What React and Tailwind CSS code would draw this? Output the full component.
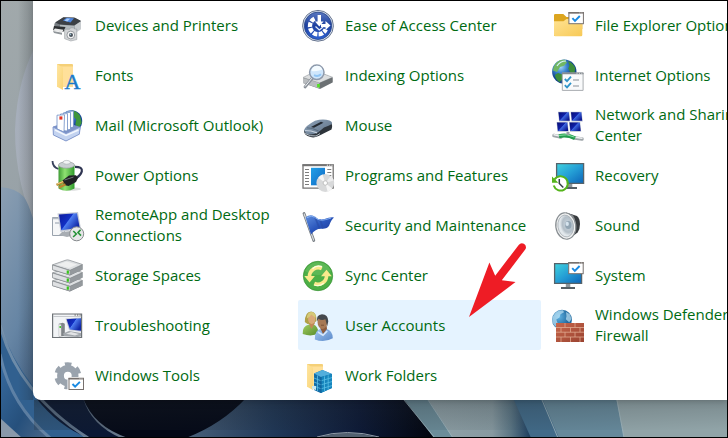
import React from "react";

function Icon({ children }) {
  return (
    <svg viewBox="0 0 32 32" className="size-8 shrink-0 overflow-visible" aria-hidden="true">
      {children}
    </svg>
  );
}

function CheckWindow({ x, y }) {
  return (
    <g transform={`translate(${x} ${y})`}>
      <rect x="0.5" y="0.5" width="14.5" height="11" fill="#fff" stroke="#77716e" />
      <path d="M0 0.6h15.5" stroke="#77716e" strokeWidth="1.6" />
      <path d="M11 .8h1M13 .8h1" stroke="#eee" strokeWidth=".8" />
      <path d="M4 6l2.6 2.7L11.4 3.8" fill="none" stroke="#1a8ae2" strokeWidth="1.9" />
    </g>
  );
}

function Printer() {
  return (
    <Icon>
      <path d="M2.5 14.5L11 8.5h11l7 3.5v5l-5 5H8l-6-3z" fill="#777d82" />
      <path d="M3 13.5L11.5 8.3 23 8.7l6 3.3-6.5 4.5L8 15.5z" fill="#3d4146" />
      <path d="M11 11.5l3.5-2.7 7.5.5-3.5 4.2z" fill="#4f86dd" />
      <path d="M12.5 11.4l2.6-1.8 3 .2-2.8 2.7z" fill="#a9cdfa" />
      <path d="M22.5 16.5l6.5-4.3v8l-6 4z" fill="#c9cdd0" />
      <path d="M8 15.8l14.5 1v6.4L8 21z" fill="#b4babd" />
      <path d="M2 17l11.5 1-2 4.8-10.5-1.5z" fill="#2d3033" />
      <path d="M3 19.5l8.5 1.2-1.4 2.6-9-1.7z" fill="#e8e9e9" />
      <path d="M1 22l9 1.8v2L2 24z" fill="#8f9599" />
      <path d="M12.6 20.2h5l1-1.4h3l1 1.2h2.2v10.6l-6 1.4-6.2-2.3z" fill="#d3d5d7" stroke="#8d9296" strokeWidth=".5" />
      <circle cx="18.8" cy="26" r="3.9" fill="#f4f4f4" stroke="#8e9397" strokeWidth=".9" />
      <circle cx="19" cy="26" r="2" fill="#49525c" />
      <circle cx="18.4" cy="25.4" r=".8" fill="#9dbecb" />
    </Icon>
  );
}

function OpenFolder({ id }) {
  return (
    <>
      <defs>
        <linearGradient id={id} x1="0" x2="1" y1="0" y2="1">
          <stop offset="0" stopColor="#ffe5a0" />
          <stop offset="1" stopColor="#f9d477" />
        </linearGradient>
      </defs>
      <path d="M5 5h15q1 0 1 1v22H5z" fill="#f5d078" />
      <path d="M9 7.5h12V28H9z" fill="#ffe09a" />
      <path d="M5 5l5.3 3.2q.7.5.7 1.4V31L5 27.8z" fill={`url(#${id})`} />
    </>
  );
}

function FontsIcon() {
  return (
    <Icon>
      <OpenFolder id="fontsFolder" />
      <text x="12.4" y="30.2" fontSize="22" fill="#1b7ac8" stroke="#1b7ac8" strokeWidth=".5" style={{ fontFamily: '"Liberation Serif", serif' }}>
        A
      </text>
    </Icon>
  );
}

function Mail() {
  return (
    <Icon>
      <defs>
        <radialGradient id="mailGlobe" cx=".35" cy=".3">
          <stop offset="0" stopColor="#7ebcf2" />
          <stop offset="1" stopColor="#123f9c" />
        </radialGradient>
      </defs>
      <circle cx="19.4" cy="12" r="10.8" fill="url(#mailGlobe)" />
      <path d="M20 1.5q5 .5 8 5l1.8 7-3 6-3.5-4 1-5-4-4z" fill="#3f953b" />
      <path d="M1 17.5l13-4 14.5 4.5-1 7L14 32 1.5 26z" fill="#7e93c8" />
      <path d="M14.5 2.5l7-.5v16l-7 2z" fill="#f6f9ff" stroke="#6d8dc4" strokeWidth=".8" />
      <path d="M11.5 3.8l7-.4v17l-7 1z" fill="#fff" stroke="#6d8dc4" strokeWidth=".8" />
      <path d="M8.5 5l7-.4v17.4l-7-.5z" fill="#fff" stroke="#6d8dc4" strokeWidth=".8" />
      <path d="M5 6.2l7.5-.4L12 23l-7-3z" fill="#fff" stroke="#6d8dc4" strokeWidth=".8" />
      <path d="M7.4 7.4h3v3.2h-3z" fill="#e43225" />
      <path d="M1 18l13 6.5L28.3 18l-1 7.2L14 32 1.4 26z" fill="#c3d3f0" stroke="#7f95cb" strokeWidth=".9" />
      <path d="M3 21l11 5.4L26.5 21" fill="none" stroke="#f3f7fe" strokeWidth="1.5" />
    </Icon>
  );
}

function Power() {
  return (
    <Icon>
      <defs>
        <linearGradient id="battery">
          <stop offset="0" stopColor="#3f9c35" />
          <stop offset=".4" stopColor="#8fe272" />
          <stop offset="1" stopColor="#2e9a2a" />
        </linearGradient>
      </defs>
      <ellipse cx="18" cy="30" rx="11" ry="1.8" fill="#dcddde" />
      <path d="M.5 2q0 6 6 8" fill="none" stroke="#39425d" strokeWidth="1.8" />
      <path d="M6.5 6h16v23.5q-8 4.5-16 0z" fill="url(#battery)" />
      <ellipse cx="14.5" cy="6" rx="8" ry="3.2" fill="#c9cfd2" stroke="#8b9296" strokeWidth=".6" />
      <ellipse cx="14.7" cy="3.3" rx="3.7" ry="1.9" fill="#f2f4f5" stroke="#969ea2" strokeWidth=".5" />
      <path d="M23 7.8q7.8 0 6.8 4.6-1 3.8-6 7" fill="none" stroke="#2f3552" strokeWidth="2.2" />
      <path d="M10.5 21.5l6.5-5 7-.3 2 2.8-2 4-7.5 4-4.5-1z" fill="#1f2124" />
      <path d="M12.5 21l9-3" stroke="#85898f" strokeWidth=".8" />
      <path d="M11.5 22.8l-7 3M13.5 25.3l-6.5 3.2" stroke="#b98630" strokeWidth="2.4" />
      <path d="M11 22.5l-6 2.6" stroke="#f5d98b" strokeWidth=".9" />
    </Icon>
  );
}

function BlueScreen({ id }) {
  return (
    <linearGradient id={id} x1="0" y1="0" x2="1" y2=".6">
      <stop offset="0" stopColor="#0d1a9c" />
      <stop offset=".5" stopColor="#1230c4" />
      <stop offset=".54" stopColor="#4d7df0" />
      <stop offset="1" stopColor="#1128a8" />
    </linearGradient>
  );
}

function RemoteApp() {
  return (
    <Icon>
      <defs><BlueScreen id="remoteScreen" /></defs>
      <path d="M.5 8.5h12v18H.5z" fill="#f6f7f8" stroke="#9aa3ad" />
      <path d="M.5 9.5h12M3 14h6" stroke="#b2bac3" strokeWidth="1.4" />
      <path d="M10 23l9-1 4 4-8 2-8-2z" fill="#a8adb3" />
      <path d="M5.5 4.5L26 3l3 17-20.5 3z" fill="#c4c9d4" />
      <path d="M7 5.5L25 4.3l2.7 14.5L9.3 21.2z" fill="url(#remoteScreen)" />
      <circle cx="24.7" cy="24.8" r="7" fill="#e6e7e8" stroke="#85898c" />
      <path d="M21.3 22l3 3-3.2 3M28.6 20.8l-2.6 2.8 3 3" fill="none" stroke="#279338" strokeWidth="1.6" />
    </Icon>
  );
}

function Storage() {
  return (
    <Icon>
      {[16.5, 8.5, 0.5].map((y) => (
        <g key={y} transform={`translate(0 ${y})`}>
          <path d="M.5 5.5v5L18 16l12.5-6V5z" fill="#7c8186" />
          <path d="M.5 5.3L14 .6q1.5-.5 3 0L30.5 5 18 10.8z" fill="#dcdfe1" stroke="#898e92" strokeWidth=".7" />
          <path d="M.5 5.5L18 11v4.6L.5 10.2z" fill="#dfe1e3" stroke="#7f8488" strokeWidth=".6" />
          <path d="M18 11l12.5-5.5v4.7L18 15.6z" fill="#94999d" />
          <path d="M5 5.2l9.5-3.2L25 5l-8 3.5z" fill="#eeefef" />
          <path d="M15.8 11v3.2" stroke="#38c51a" strokeWidth="2.2" />
        </g>
      ))}
    </Icon>
  );
}

function Troubleshooting() {
  return (
    <Icon>
      <defs><BlueScreen id="troubleScreen" /></defs>
      <path d="M.6 5h29v23.5H.6z" fill="#f2f4f6" stroke="#6e7377" strokeWidth="1.2" />
      <path d="M1.2 7.5h28" stroke="#b9bdc1" strokeWidth=".8" />
      <path d="M22.5 6h1.3M25 6h1.3M27.5 6h1.3" stroke="#555" strokeWidth="1" />
      <path d="M6.8 14.7l4-1 2 1V27l-6 .5z" fill="#7f8488" />
      <path d="M7 15.2l2.2.2v11.8L7 27z" fill="#e8e8e8" />
      <path d="M8.2 17v2" stroke="#3fc92d" strokeWidth="1.5" />
      <path d="M13.5 9.5l15.5-1v14.2l-12-1.4z" fill="#c4c9d5" />
      <path d="M14.6 10.3L29 9.2v12.5l-11-1.3z" fill="url(#troubleScreen)" />
      <path d="M11 24.5l6-2.5 12 2v3.4l-3 .6-14-.8z" fill="#a3a8ad" />
      <path d="M14 24.8l5-1.7 8 1.8-4 1.5z" fill="#e2e4e6" />
    </Icon>
  );
}

function Tools() {
  return (
    <Icon>
      <g fill="none" stroke="#9aa3ad">
        <circle cx="15.8" cy="16.7" r="7.3" strokeWidth="6.8" />
        <circle cx="15.8" cy="16.7" r="11.3" strokeWidth="4.4" strokeDasharray="6.3 5.533" strokeDashoffset="9.07" />
      </g>
      <path d="M15.5 18h17v13.5h-17z" fill="#fff" />
      <CheckWindow x={16.5} y={19} />
    </Icon>
  );
}

function Ease() {
  return (
    <Icon>
      <defs>
        <linearGradient id="easeBlue" x2="0" y2="1">
          <stop offset="0" stopColor="#5a78c0" />
          <stop offset=".5" stopColor="#1c3f9f" />
          <stop offset="1" stopColor="#2f62d2" />
        </linearGradient>
      </defs>
      <circle cx="16" cy="16.8" r="15.4" fill="#dce5f3" stroke="#68758e" />
      <circle cx="16" cy="16.8" r="13.7" fill="url(#easeBlue)" stroke="#274587" strokeWidth=".8" />
      <path d="M12.5 9.6a8.3 8.3 0 1 0 11.3 10.8" fill="none" stroke="#fff" strokeWidth="4.4" strokeDasharray="4.4 1.2" />
      <path d="M17.3 6v8" stroke="#fff" strokeWidth="3.4" />
      <path d="M13 12.6h8.6l-4.3 5z" fill="#fff" />
      <path d="M19 16.6h6" stroke="#fff" strokeWidth="3.2" />
      <path d="M23.5 12l5 4.6-5 4.5z" fill="#fff" />
      <path d="M13.5 17.5l3.8 3.5 3.5-2.7" fill="none" stroke="#e7eefb" strokeWidth="1.2" />
    </Icon>
  );
}

function Indexing() {
  return (
    <Icon>
      <path d="M1 19l13-7 16.5 6.5v5L18 30 1 24z" fill="#74797d" />
      <path d="M1 18.5L14 12l16.5 6.2L17.5 24z" fill="#dcdedf" stroke="#a0a4a7" strokeWidth=".6" />
      <path d="M1 19l16.5 5v5.5L1 24z" fill="#b9bcbf" />
      <path d="M17.5 24l13-5.5v4.7l-13 6z" fill="#6b7073" />
      <path d="M16.5 25v3.4" stroke="#54df25" strokeWidth="2.8" />
      <path d="M10.5 19l-7.5 9" stroke="#8b9199" strokeWidth="2.8" strokeLinecap="round" />
      <path d="M10 19l-7 8.5" stroke="#eef1f4" strokeWidth="1" />
      <circle cx="14.8" cy="13.3" r="7.2" fill="#cfe6fb" stroke="#8d99ab" strokeWidth="1.5" />
      <path d="M9.5 12q.5-5 5.5-5.2 4.5 0 5.3 4-6 2-10.8 1.2z" fill="#f4fbff" />
      <path d="M12 16.2q4 2 7-1" stroke="#91c5f4" strokeWidth="2" fill="none" />
    </Icon>
  );
}

function Mouse() {
  return (
    <Icon>
      <defs>
        <linearGradient id="mouseTop" y2="1">
          <stop offset="0" stopColor="#8ea3b9" />
          <stop offset="1" stopColor="#5f7287" />
        </linearGradient>
      </defs>
      <path d="M2 21.5q0 5 6.5 6.6 4 1 8-1l13-6.6q1-2 .5-5-3-4-12-3z" fill="#2d343b" />
      <path d="M2 21.2q1-4 11-9.4 8-2.5 14.5-.2 3 1.4 2.5 3.4-3 1.5-8 3.5l-6 5Q9 27 4 24.5z" fill="url(#mouseTop)" />
      <path d="M3 21.5q6 0 12 2.4" stroke="#c5d0dc" strokeWidth="1.2" fill="none" />
      <path d="M5 18.8q5-.3 11.5 3.2" stroke="#526376" strokeWidth=".8" fill="none" />
      <path d="M9 18l10-5.3 2.5 1L12 18.8z" fill="#242a32" />
      <path d="M3 24.5q5 3 11 2.5l4-2.4" stroke="#b4bdc5" strokeWidth="1" fill="none" />
    </Icon>
  );
}

function Programs() {
  return (
    <Icon>
      <defs>
        <linearGradient id="programBlue" x2="1" y2="1">
          <stop offset="0" stopColor="#21a0e7" />
          <stop offset="1" stopColor="#1168c4" />
        </linearGradient>
      </defs>
      <path d="M1 5.8h30.2v23.4H1z" fill="#fff" stroke="#747373" strokeWidth="1.3" />
      <path d="M.5 6.2h31" stroke="#747373" strokeWidth="2" />
      <path d="M24.8 6.2h1.2M27.1 6.2h1.2M29.4 6.2h1.2" stroke="#eee" strokeWidth="1" />
      <path d="M3 10.5h4M3 13.5h4M3 16.5h4M3 19.5h4M3 22.5h4M3 25.5h4M25.3 10.5h4M25.3 13.5h4M25.3 16.5h4" stroke="#7d7d7d" />
      <path d="M9 8.8h14v17.5H9z" fill="url(#programBlue)" />
      <circle cx="23.3" cy="24" r="8.9" fill="#d8d9da" />
      <path d="M23.3 24l-7-5.3a9 9 0 0 1 4.3-3.1zM23.3 24l6.8 5.4a9 9 0 0 1-4.5 3.2z" fill="#f6f6f6" />
      <path d="M23.3 24l5.5-7a9 9 0 0 1 3 4.5z" fill="#ededee" />
      <circle cx="23.3" cy="24" r="2.2" fill="#fff" stroke="#b5b5b5" strokeWidth=".8" />
    </Icon>
  );
}

function Flag() {
  return (
    <Icon>
      <defs>
        <linearGradient id="flagBlue" y2="1">
          <stop offset="0" stopColor="#5f8ede" />
          <stop offset=".5" stopColor="#2b57bd" />
          <stop offset="1" stopColor="#1b3391" />
        </linearGradient>
      </defs>
      <path d="M2 4.5l9.8 27" stroke="#73797f" strokeWidth="2.8" strokeLinecap="round" />
      <path d="M2 4.5l9.8 27" stroke="#d9dde0" strokeWidth="1.2" />
      <path d="M3.5 8.5Q8 4.5 12.5 7.5q4 4 10 2.5 5-2 9.5-1.6-3 2.4-4.8 8.2-2 3.5-7.2 3.2-6-.7-11 5.7z" fill="url(#flagBlue)" />
      <path d="M13 8l4.5 11.5M18 10.4l3 9" stroke="#284ca7" strokeWidth="1.8" opacity=".6" />
      <path d="M5 8.7q4.5-3 7.5-.5 5 4.3 11 2.4l5.5-1.5" fill="none" stroke="#8cb5f4" strokeWidth=".9" />
    </Icon>
  );
}

function Sync() {
  return (
    <Icon>
      <circle cx="16" cy="17" r="14.7" fill="#4caf46" stroke="#389132" strokeWidth=".7" />
      <path d="M3 12a14 14 0 0 1 26 0q-13 8-26 0z" fill="#79c56f" opacity=".4" />
      <g fill="none" stroke="#fae98c" strokeWidth="3.6">
        <path d="M7.5 17.5a8.7 8.7 0 0 1 12.3-8" />
        <path d="M24.6 16.5a8.7 8.7 0 0 1-12.3 8" />
      </g>
      <path d="M2.3 17h10.6l-5.3 6.4zM19 17.2l5.5-6.5 5.3 6.5z" fill="#fae98c" />
      <path d="M10.5 9.7q4-4 9.5-1.9" fill="none" stroke="#fffbd9" strokeWidth="1.5" />
      <path d="M21.7 24.2q-4.3 3.7-9.5 1.8" fill="none" stroke="#fffbd9" strokeWidth="1.2" />
    </Icon>
  );
}

function Users() {
  return (
    <Icon>
      <defs>
        <linearGradient id="userGreen" y2="1">
          <stop offset="0" stopColor="#a2cd62" />
          <stop offset="1" stopColor="#568c2a" />
        </linearGradient>
        <linearGradient id="userBlue" y2="1">
          <stop offset="0" stopColor="#a3c8f2" />
          <stop offset="1" stopColor="#5a89c9" />
        </linearGradient>
      </defs>
      <path d="M.7 25q-.6-8 6.2-9.5h4.8q4.5 2 4.7 8.5-6 4.2-15.7 1z" fill="url(#userGreen)" />
      <path d="M6.5 14l3 6 3.2-5.5v-3H6.5z" fill="#c28756" />
      <path d="M2.8 13Q3 2.5 9.2 2.4q5.5.2 5.3 9.6l-3.5 2.5-5.5.5z" fill="#b0a048" />
      <ellipse cx="9.7" cy="10" rx="3.6" ry="5" fill="#d9a878" />
      <path d="M4.8 9.5q3.5-1.6 4.5-4 1.7 2 4.6 3.2Q13.5 3 9.2 3 5 3.2 4.8 9.5z" fill="#d5c978" />
      <path d="M12.8 30.5q-.5-9 6-10.7h5.7q6.4 2.3 6.3 9.5-8.5 4.8-18 1.2z" fill="url(#userBlue)" />
      <path d="M18 18.5l3 6.5 4-5-.4-3.5h-6z" fill="#8d5b3c" />
      <ellipse cx="20.4" cy="13.2" rx="4.8" ry="6.7" fill="#a77955" />
      <path d="M15 12.5Q14 5.8 20 5.3q6 .1 6.3 7l-1.1 5-1.8-7q-4 1.6-6.9-.6z" fill="#44484d" />
      <path d="M19 16.2h3" stroke="#694028" strokeWidth=".7" />
      <path d="M16 23l5 3.2 4.2-4.2" stroke="#d7e8fb" strokeWidth="1.6" fill="none" />
    </Icon>
  );
}

function WorkFolders() {
  return (
    <Icon>
      <OpenFolder id="workFolder" />
      <path d="M12 14.5L20.5 11l9.5 4v14l-11.5 5L12 31z" fill="#126ca7" />
      <path d="M12 14.5L20.5 11l9.5 4-11 3z" fill="#52aedc" />
      <path d="M19 18l11-3v14l-11 5z" fill="#1685bd" />
      <path d="M12 19l7 2.8 11-3.2M12 23l7 2.8 11-3.2M12 27l7 2.8 11-3.2M15.5 16.5V32M22.5 17.4v15M26.2 16.3V30.8" fill="none" stroke="#5cc0e6" strokeWidth=".8" />
      <path d="M19 18v16" stroke="#0c5e98" strokeWidth="1" />
      <path d="M10 27h4v4l-4-1z" fill="#c8e7f1" />
    </Icon>
  );
}

function ExplorerOptions() {
  return (
    <Icon>
      <defs>
        <linearGradient id="explorerFolder" y2="1">
          <stop offset="0" stopColor="#ffe394" />
          <stop offset="1" stopColor="#f7c956" />
        </linearGradient>
      </defs>
      <path d="M2 27V6.2Q2 5 3.3 5h8l3.2 3H29q1.3 0 1.3 1.2V20z" fill="#dca51f" />
      <path d="M2 12.3h9.5l3-2.3H29q1.3 0 1.3 1.2V26q0 1.3-1.3 1.3H3.3Q2 27.3 2 26z" fill="url(#explorerFolder)" />
      <CheckWindow x={16.4} y={3.2} />
    </Icon>
  );
}

function InternetOptions() {
  return (
    <Icon>
      <defs>
        <radialGradient id="internetGlobe" cx=".35" cy=".3">
          <stop offset="0" stopColor="#a8daf6" />
          <stop offset=".5" stopColor="#3d86d0" />
          <stop offset="1" stopColor="#12438e" />
        </radialGradient>
      </defs>
      <circle cx="12.3" cy="12.7" r="12.2" fill="url(#internetGlobe)" />
      <path d="M4 4q4-4 9-3.2l2 2.7-3 3.3-4 1.2-3 5-4-1.5q0-4 3-7.5z" fill="#72b763" />
      <path d="M16 2q5 2 7.3 7l-1 6-4-1.5-2-4 1.2-3zM6 14l6 2-1.8 4.3-2.7 3Q3 20 3 16z" fill="#3c8d3a" />
      <path d="M5 7q3-5 9-5" stroke="#d4f2fc" strokeWidth="1.2" fill="none" />
      <path d="M10.3 14h20.8v17.4H10.3z" fill="#f9fafb" stroke="#a9adb1" />
      <path d="M10 14.4h21.5" stroke="#858b91" strokeWidth="1.7" />
      <path d="M24.5 14.3h1M27 14.3h1M29.3 14.3h1" stroke="#eee" strokeWidth=".8" />
      <path d="M12.8 20l2.2 2.2 4-4.5M12.8 26.2l2.2 2.2 4-4.5" stroke="#2f93c9" strokeWidth="1.8" fill="none" />
      <path d="M21 21h6M21 27h6" stroke="#899099" strokeWidth="1.2" />
    </Icon>
  );
}

function Network() {
  return (
    <Icon>
      <defs>
        <linearGradient id="networkScreen" x2="1" y2=".7">
          <stop offset="0" stopColor="#070d74" />
          <stop offset=".5" stopColor="#0f1fa6" />
          <stop offset=".56" stopColor="#3c66e0" />
          <stop offset="1" stopColor="#0c1790" />
        </linearGradient>
      </defs>
      {[[6, 2.7], [18.5, 2.7], [4.5, 13], [17, 13]].map(([x, y]) => (
        <g key={`${x}-${y}`} transform={`translate(${x} ${y})`}>
          <path d="M0 0h11.2l1 9.8H1z" fill="#b8c0d0" />
          <path d="M.5 .5h10.3l.9 8.5H1.4z" fill="url(#networkScreen)" />
        </g>
      ))}
      <path d="M2 26.5l7 1.5M23 29l7 1" stroke="#9ea5a9" strokeWidth="3.5" strokeLinecap="round" />
      <path d="M2 25.8l7 1.5M23 28.2l7 1" stroke="#eef0f1" strokeWidth="1.4" strokeLinecap="round" />
      <path d="M7 27.2q8-2 16 2" stroke="#229c4e" strokeWidth="4" fill="none" />
      <path d="M7 26.4q8-2 15.5 1.7" stroke="#8cdfa5" strokeWidth="1" fill="none" />
      <path d="M14.5 23h3v3h-3z" fill="#99a1a7" />
    </Icon>
  );
}

function Monitor({ id, x }) {
  return (
    <g transform={`translate(${x} 4)`}>
      <defs>
        <linearGradient id={id} x2="1" y2="1">
          <stop offset="0" stopColor="#3fd3df" />
          <stop offset=".5" stopColor="#249ed5" />
          <stop offset="1" stopColor="#0c63b8" />
        </linearGradient>
      </defs>
      <path d="M.6 .6h27v19.8H.6z" fill={`url(#${id})`} stroke="#55636b" strokeWidth="1.3" />
      <path d="M11.8 21h4.5v3h-4.5z" fill="#8c969c" />
      <path d="M7 24h14v2H7z" fill="#555f65" />
    </g>
  );
}

function Recovery() {
  return (
    <Icon>
      <Monitor id="recoveryScreen" x={4} />
      <circle cx="8.5" cy="24.7" r="7" fill="#fff" />
      <path d="M2.5 20.5a7.2 7.2 0 1 1-.8 6" fill="none" stroke="#55b41b" strokeWidth="2" />
      <path d="M0 17.5v6.3h6.3z" fill="#55b41b" />
      <path d="M7.3 20v4.5l4 4" fill="none" stroke="#364047" strokeWidth="1.5" />
    </Icon>
  );
}

function Sound() {
  return (
    <Icon>
      <defs>
        <radialGradient id="speakerCone" cx=".65" cy=".45">
          <stop offset="0" stopColor="#8193a0" />
          <stop offset=".25" stopColor="#c3cfd8" />
          <stop offset=".7" stopColor="#b3bec7" />
          <stop offset="1" stopColor="#e2e8ec" />
        </radialGradient>
      </defs>
      <path d="M14 3.5L25 7q3 2.5 3 8t-2.4 8.5L17 30z" fill="#383b3e" />
      <path d="M20 6q5 8 1 20" stroke="#76797c" strokeWidth="2" fill="none" />
      <ellipse cx="13.8" cy="17" rx="10" ry="13.3" transform="rotate(-8 13.8 17)" fill="#f1f2f2" stroke="#888e92" strokeWidth="1.2" />
      <ellipse cx="13.7" cy="17" rx="7.8" ry="11" transform="rotate(-8 13.7 17)" fill="url(#speakerCone)" stroke="#a6aeb4" strokeWidth=".8" />
      <ellipse cx="16.3" cy="16" rx="3.2" ry="4" fill="#92a5b3" />
      <ellipse cx="15.2" cy="14.9" rx="1.7" ry="2.1" fill="#d6e4ee" />
    </Icon>
  );
}

function System() {
  return (
    <Icon>
      <Monitor id="systemScreen" x={2} />
      <CheckWindow x={16.2} y={3.2} />
    </Icon>
  );
}

function Firewall() {
  return (
    <Icon>
      <defs>
        <radialGradient id="wallGlobe" cx=".35" cy=".35">
          <stop offset="0" stopColor="#5fb2e2" />
          <stop offset="1" stopColor="#226a9f" />
        </radialGradient>
        <linearGradient id="wallBrick" x2="1" y2="1">
          <stop offset="0" stopColor="#c9674b" />
          <stop offset="1" stopColor="#994230" />
        </linearGradient>
      </defs>
      <circle cx="10" cy="10.8" r="10" fill="url(#wallGlobe)" />
      <path d="M3 4.5Q6 1 11 1.2l1 2-3.5 2-1 3.4-3.2 2L6 15l-2 3Q-1 14 .6 8zM14 3l4 2.3 1.5 5-2.3 3-3.4-3 .7-3z" fill="#c9ebfa" opacity=".65" />
      <path d="M4 14h28v19H4z" fill="url(#wallBrick)" />
      <path d="M4 18.5h28M4 23.2h28M4 28h28M13 14v4.5M23 14v4.5M9 18.5v4.7M18.5 18.5v4.7M28 18.5v4.7M13 23.2V28M23 23.2V28M9 28v5M18.5 28v5M28 28v5" stroke="#e0aa91" strokeWidth=".8" />
    </Icon>
  );
}

const columns = [
  [
    ["Devices and Printers", Printer],
    ["Fonts", FontsIcon],
    ["Mail (Microsoft Outlook)", Mail],
    ["Power Options", Power],
    ["RemoteApp and Desktop Connections", RemoteApp],
    ["Storage Spaces", Storage],
    ["Troubleshooting", Troubleshooting],
    ["Windows Tools", Tools],
  ],
  [
    ["Ease of Access Center", Ease],
    ["Indexing Options", Indexing],
    ["Mouse", Mouse],
    ["Programs and Features", Programs],
    ["Security and Maintenance", Flag],
    ["Sync Center", Sync],
    ["User Accounts", Users],
    ["Work Folders", WorkFolders],
  ],
  [
    ["File Explorer Options", ExplorerOptions],
    ["Internet Options", InternetOptions],
    ["Network and Sharing Center", Network],
    ["Recovery", Recovery],
    ["Sound", Sound],
    ["System", System],
    ["Windows Defender Firewall", Firewall],
  ],
];

function Wallpaper() {
  return (
    <svg className="absolute inset-0 h-full w-full" viewBox="0 0 728 438" preserveAspectRatio="xMinYMax slice" aria-hidden="true">
      <defs>
        <linearGradient id="sky" y2="1">
          <stop offset="0" stopColor="#a1a9ab" />
          <stop offset=".4" stopColor="#929da5" />
          <stop offset=".6" stopColor="#7d90a3" />
          <stop offset=".8" stopColor="#40658d" />
          <stop offset="1" stopColor="#2b5c91" />
        </linearGradient>
        <linearGradient id="petal" y2="1">
          <stop offset="0" stopColor="#a5aebd" />
          <stop offset=".7" stopColor="#a8afb7" />
          <stop offset="1" stopColor="#929ca6" />
        </linearGradient>
        <linearGradient id="leftPetal" y2="1">
          <stop offset="0" stopColor="#8c9fb2" />
          <stop offset=".35" stopColor="#6685a4" />
          <stop offset=".6" stopColor="#3f5f84" />
          <stop offset=".85" stopColor="#1b3458" />
          <stop offset="1" stopColor="#11264b" />
        </linearGradient>
        <linearGradient id="blueFold" x2="1" y2="1">
          <stop offset="0" stopColor="#3a6ea3" />
          <stop offset=".6" stopColor="#26507c" />
          <stop offset="1" stopColor="#4b6889" />
        </linearGradient>
        <linearGradient id="centerFold" x2="1">
          <stop offset="0" stopColor="#48607a" />
          <stop offset=".35" stopColor="#20395a" />
          <stop offset=".7" stopColor="#0c1937" />
          <stop offset="1" stopColor="#02050e" />
        </linearGradient>
        <linearGradient id="grayFold" x2="1">
          <stop offset="0" stopColor="#91a3a9" />
          <stop offset=".62" stopColor="#879aa1" />
          <stop offset=".8" stopColor="#5b7685" />
          <stop offset="1" stopColor="#183a5c" />
        </linearGradient>
        <linearGradient id="edgeShade" y2="1">
          <stop offset="0" stopColor="#202427" stopOpacity=".4" />
          <stop offset="1" stopColor="#202427" stopOpacity="0" />
        </linearGradient>
        <linearGradient id="sideShade">
          <stop offset="0" stopColor="#202427" stopOpacity="0" />
          <stop offset="1" stopColor="#202427" stopOpacity=".24" />
        </linearGradient>
      </defs>
      <path d="M0 0h728v438H0z" fill="url(#sky)" />
      <path d="M40 38Q17 76 15 130q0 55 24 106z" fill="url(#petal)" />
      <path d="M0 187q16 1 24 10 16 22 45 203l45 38H0z" fill="url(#leftPetal)" />
      <path d="M0 325q22 67 90 113H0z" fill="#31608f" />
      <path d="M0 350q10 50 50 88H0z" fill="url(#blueFold)" />
      <path d="M36 398h60l34 40H88Q58 426 36 398z" fill="#091735" />
      <path d="M0 325q17 67 88 113" stroke="#829ab0" strokeWidth="3" fill="none" opacity=".75" />
      <path d="M0 354q10 50 50 84" stroke="#7895b3" strokeWidth="3" fill="none" opacity=".65" />
      <path d="M0 418l22 20H0z" fill="#8999aa" />
      <path d="M83 398h332l23 40H127Q96 428 83 398z" fill="#020716" />
      <path d="M83 398q10 28 45 40h-7Q91 425 83 398z" fill="#66778a" />
      <path d="M246 398q-24 26-60 40h248l-26-40z" fill="url(#centerFold)" />
      <path d="M317 438q30-10 62 0z" fill="#526170" />
      <path d="M317 437q30-9 62 0" fill="none" stroke="#8f9ba7" />
      <path d="M403 398h26l25 40h-20z" fill="#6c8d9a" />
      <path d="M427 398h87l18 40h-79z" fill="url(#grayFold)" />
      <path d="M513 398h30l16 40h-28z" fill="#426b89" />
      <path d="M542 398h75l7 40h-65z" fill="#66899b" />
      <path d="M616 398h112v40H624z" fill="#91a4a8" />
      <path d="M404 400l31 38M428 400l25 38M542 400l16 38M617 400l7 38" stroke="#a1b7bf" strokeWidth="1" opacity=".8" />
      <path d="M34 400h694v30H34z" fill="url(#edgeShade)" />
      <path d="M18 0h15v400H18z" fill="url(#sideShade)" />
    </svg>
  );
}

function PointerArrow() {
  return (
    <svg className="pointer-events-none absolute left-[469px] top-[242px] h-[76px] w-[58px]" viewBox="469 242 58 76" aria-hidden="true">
      <path d="M469 317L489.4 262.5l5.8 13.2L518.7 245q2.1-2.7 5.2-1.2 3.4 2.5 1.3 5.7L501.8 280.3 515.5 282z" fill="#ee1c25" />
    </svg>
  );
}

export default function App() {
  return (
    <div className="relative min-h-screen overflow-hidden bg-[#102342] pl-[33px] pb-[38px] font-['Open_Sans','Noto_Sans',sans-serif]">
      <Wallpaper />
      <main className="relative overflow-hidden rounded-bl-lg bg-white pl-[15px] shadow-md">
        <div className="flex gap-[7px]">
          {columns.map((items, index) => (
            <ul key={index} className="w-[243px] shrink-0">
              {items.map(([label, Drawing]) => (
                <li key={label}>
                  <a
                    href="#"
                    className={
                      label === "User Accounts"
                        ? "flex h-[50px] items-center gap-[11px] rounded-xs bg-[#e5f3ff] pr-3 pl-1"
                        : "flex h-[50px] items-center gap-[11px] rounded-xs pr-3 pl-1 hover:bg-[#e5f3ff]"
                    }
                  >
                    <Drawing />
                    <span className="text-[15px] leading-[21px] text-[#006a12]">{label}</span>
                  </a>
                </li>
              ))}
            </ul>
          ))}
        </div>
      </main>
      <PointerArrow />
      <div className="pointer-events-none absolute inset-0 border border-black" />
    </div>
  );
}
